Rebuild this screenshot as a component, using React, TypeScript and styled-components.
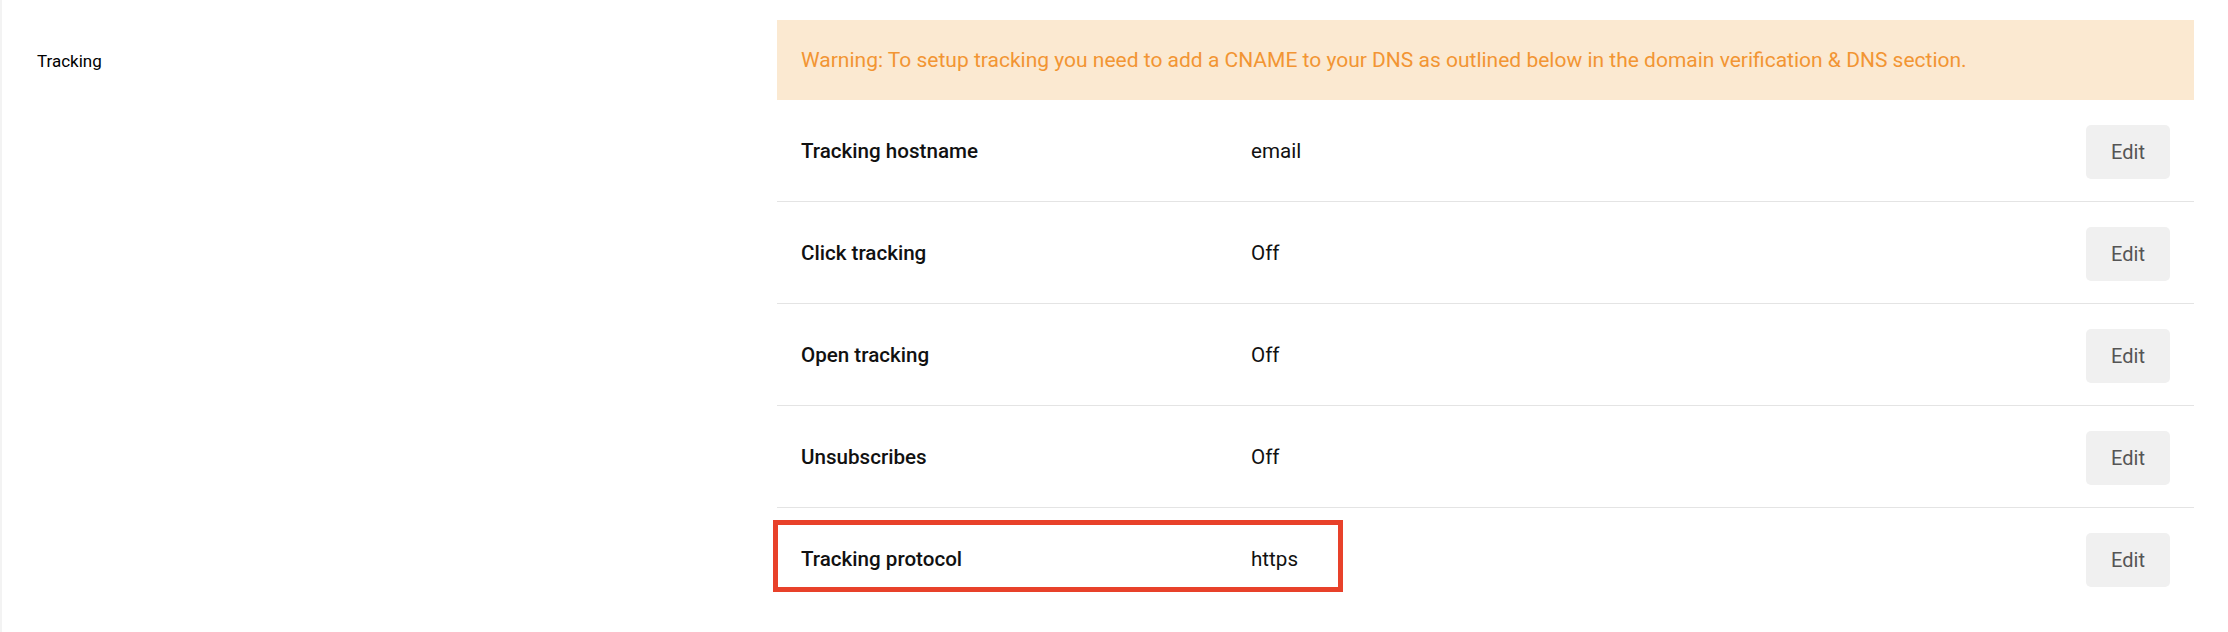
import React from "react"
import styled, { createGlobalStyle } from "styled-components"

const rows = [
  { label: "Tracking hostname", value: "email" },
  { label: "Click tracking", value: "Off" },
  { label: "Open tracking", value: "Off" },
  { label: "Unsubscribes", value: "Off" },
  { label: "Tracking protocol", value: "https", marked: true },
]

const App = () => {
  return (
    <>
      <GlobalStyle />
      <Page>
        <Side>
          <SideTitle>Tracking</SideTitle>
        </Side>
        <Content>
          <Warning>
            Warning: To setup tracking you need to add a CNAME to your DNS as outlined below in the domain verification &amp; DNS section.
          </Warning>
          {rows.map((row) => (
            <Row key={row.label}>
              <Label>{row.label}</Label>
              <Value>{row.value}</Value>
              <EditButton>Edit</EditButton>
              {row.marked && <Highlight />}
            </Row>
          ))}
        </Content>
      </Page>
    </>
  )
}

export default App

const GlobalStyle = createGlobalStyle`
  html, body {
    margin: 0;
    background: #fff;
    font-family: Roboto, "Liberation Sans", sans-serif;
    color: #111;
  }
`

const Page = styled.div`
  display: flex;
  width: 2228px;
  height: 632px;
  overflow: hidden;
`

const Side = styled.div`
  width: 777px;
  flex-shrink: 0;
  border-left: 2px solid #f3f3f3;
  padding: 51px 0 0 35px;
  box-sizing: border-box;
`

const SideTitle = styled.div`
  font-size: 17px;
  line-height: 20px;
  color: #000;
`

const Content = styled.div`
  flex: 1;
  margin-right: 34px;
  padding-top: 20px;
  display: flex;
  flex-direction: column;
`

const Warning = styled.div`
  height: 80px;
  display: flex;
  align-items: center;
  padding: 0 24px;
  background: #fbe9d1;
  color: #f29533;
  font-size: 21px;
  line-height: 24px;
`

const Row = styled.div`
  position: relative;
  height: 101px;
  display: flex;
  align-items: center;
  padding: 0 24px;
  border-bottom: 1px solid #e4e4e4;
  font-size: 20.6px;
  line-height: 24px;

  &:last-child {
    border-bottom: none;
  }
`

const Label = styled.div`
  width: 450px;
  font-weight: 500;
  color: #111;
`

const Value = styled.div`
  flex: 1;
  color: #111;
`

const EditButton = styled.button`
  width: 84px;
  height: 54px;
  margin-top: 2px;
  border: none;
  border-radius: 5px;
  background: #f0f0f0;
  color: #555;
  font-family: inherit;
  font-size: 20px;
`

const Highlight = styled.div`
  position: absolute;
  left: -4px;
  top: 12px;
  width: 570px;
  height: 72px;
  border: 5px solid #e8412a;
  box-sizing: border-box;
  pointer-events: none;
`
